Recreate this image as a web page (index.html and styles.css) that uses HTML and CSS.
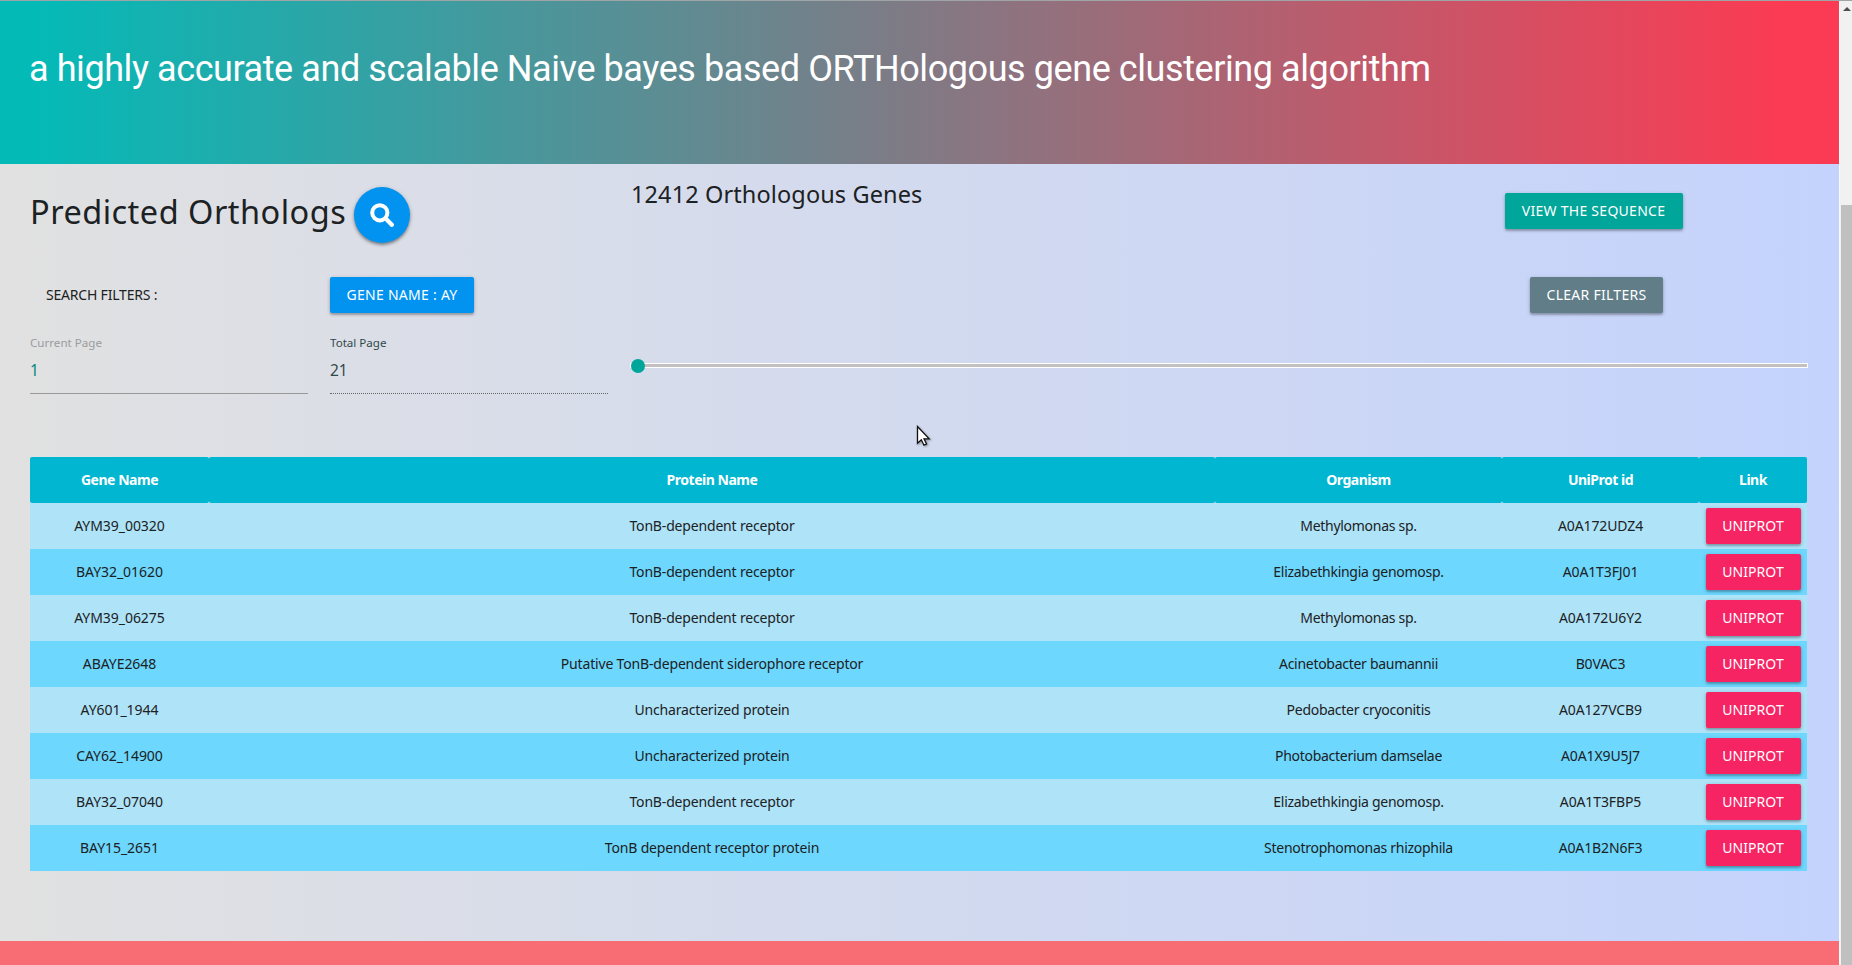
FILE: index.html
```
<!DOCTYPE html>
<html lang="en">
<head>
<meta charset="utf-8">
<title>Predicted Orthologs</title>
<link rel="stylesheet" href="styles.css">
</head>
<body>
<div class="page">
  <header class="banner"><h1>a highly accurate and scalable Naive bayes based ORTHologous gene clustering algorithm</h1></header>
  <main class="content">
    <div class="row heading-row">
      <div class="heading">
        <h2>Predicted Orthologs</h2>
        <button class="search" aria-label="Search"><svg width="24" height="24" viewBox="0 0 24 24"><circle cx="9.8" cy="9.8" r="7.6" fill="none" stroke="#fff" stroke-width="4"/><path d="M15.6 15.6L21.8 21.8" stroke="#fff" stroke-width="4.3" stroke-linecap="round"/></svg></button>
      </div>
      <h3>12412 Orthologous Genes</h3>
      <div class="action"><button class="btn teal">VIEW THE SEQUENCE</button></div>
    </div>
    <div class="row filter-row">
      <span class="filter-label">SEARCH FILTERS :</span>
      <div><button class="btn blue">GENE NAME : AY</button></div>
      <div class="action"><button class="btn grey">CLEAR FILTERS</button></div>
    </div>
    <div class="row pager-row">
      <div class="field current"><label>Current Page</label><span class="value">1</span></div>
      <div class="field total"><label>Total Page</label><span class="value">21</span></div>
      <div class="slider"><span class="thumb"></span></div>
    </div>
    <table>
      <colgroup><col class="c-gene"><col class="c-protein"><col class="c-organism"><col class="c-id"><col class="c-link"></colgroup>
      <thead><tr><th>Gene Name</th><th>Protein Name</th><th>Organism</th><th>UniProt id</th><th>Link</th></tr></thead>
      <tbody>
        <tr><td class="gene">AYM39_00320</td><td class="protein">TonB-dependent receptor</td><td class="organism">Methylomonas sp.</td><td class="id">A0A172UDZ4</td><td class="link"><button class="btn pink">UNIPROT</button></td></tr>
        <tr><td class="gene">BAY32_01620</td><td class="protein">TonB-dependent receptor</td><td class="organism">Elizabethkingia genomosp.</td><td class="id">A0A1T3FJ01</td><td class="link"><button class="btn pink">UNIPROT</button></td></tr>
        <tr><td class="gene">AYM39_06275</td><td class="protein">TonB-dependent receptor</td><td class="organism">Methylomonas sp.</td><td class="id">A0A172U6Y2</td><td class="link"><button class="btn pink">UNIPROT</button></td></tr>
        <tr><td class="gene">ABAYE2648</td><td class="protein">Putative TonB-dependent siderophore receptor</td><td class="organism">Acinetobacter baumannii</td><td class="id">B0VAC3</td><td class="link"><button class="btn pink">UNIPROT</button></td></tr>
        <tr><td class="gene">AY601_1944</td><td class="protein">Uncharacterized protein</td><td class="organism">Pedobacter cryoconitis</td><td class="id">A0A127VCB9</td><td class="link"><button class="btn pink">UNIPROT</button></td></tr>
        <tr><td class="gene">CAY62_14900</td><td class="protein">Uncharacterized protein</td><td class="organism">Photobacterium damselae</td><td class="id">A0A1X9U5J7</td><td class="link"><button class="btn pink">UNIPROT</button></td></tr>
        <tr><td class="gene">BAY32_07040</td><td class="protein">TonB-dependent receptor</td><td class="organism">Elizabethkingia genomosp.</td><td class="id">A0A1T3FBP5</td><td class="link"><button class="btn pink">UNIPROT</button></td></tr>
        <tr><td class="gene">BAY15_2651</td><td class="protein">TonB dependent receptor protein</td><td class="organism">Stenotrophomonas rhizophila</td><td class="id">A0A1B2N6F3</td><td class="link"><button class="btn pink">UNIPROT</button></td></tr>
      </tbody>
    </table>
  </main>
  <footer class="footer"></footer>
</div>
<div class="scrollbar"><span class="arrow-up"></span><span class="bar"></span></div>
<svg class="cursor" width="16" height="24" viewBox="0 0 16 24"><path d="M1.5 1.5V18.3L5.3 14.8L8 20.2L10.6 19L8 13.8H13.2Z" fill="#fff" stroke="#111" stroke-width="1.3"/></svg>
</body>
</html>
```
FILE: styles.css
```
* { box-sizing: border-box; }
body {
  margin: 0;
  height: 965px;
  display: flex;
  overflow: hidden;
  border-top: 1px solid #9fa5a7;
  font-family: "Noto Sans", sans-serif;
  font-size: 14px;
  color: #1c2123;
}
h1, h2, h3 { margin: 0; font-weight: 400; }
.page { width: 1839px; display: flex; flex-direction: column; }
.banner {
  height: 163px;
  padding: 38px 29px 0;
  background: linear-gradient(90deg, #04bab7 2%, #fb3b53 97%);
  color: #fff;
}
.banner h1 {
  font: 400 36px/60px Roboto, sans-serif;
  letter-spacing: -0.42px;
  white-space: nowrap;
}
.content {
  height: 777px;
  padding: 0 32px 0 30px;
  background: linear-gradient(90deg, #e1e1e1, #c4d3fd);
}
.footer { flex: 1; background: #f86c74; }

.row { display: grid; column-gap: 22px; }
.heading-row { grid-template-columns: 578px 728px 427px; height: 96px; }
.heading { display: flex; align-items: center; gap: 8px; height: 102px; }
h2 { font-size: 32.5px; line-height: 44px; letter-spacing: 0.48px; padding-bottom: 6px; white-space: nowrap; }
h3 { font-size: 23.5px; line-height: 30px; letter-spacing: 0.11px; padding: 15px 0 0 1px; }
.action { display: flex; justify-content: center; align-items: flex-start; }
.heading-row .action { padding-top: 29px; }
.search {
  width: 56px;
  height: 56px;
  border: 0;
  padding: 0;
  border-radius: 50%;
  display: grid;
  place-items: center;
  background: #0292f0;
  box-shadow: 0 2px 3px rgba(0,0,0,.35), 0 1px 5px rgba(0,0,0,.15);
}

.btn {
  height: 36px;
  padding: 0 16.5px;
  border: 0;
  border-radius: 2px;
  color: #fff;
  font: 14px/36px "Noto Sans", sans-serif;
  letter-spacing: 0.27px;
  white-space: nowrap;
  box-shadow: 0 2px 2px rgba(0,0,0,.2), 0 1px 4px rgba(0,0,0,.2);
}
.teal { width: 178px; background: #00a69a; }
.blue { width: 144px; background: #0292f0; }
.grey { width: 133px; background: #607d88; }
.pink { width: 95px; background: #f72464; letter-spacing: 0.05px; display: block; margin: 0 auto; }

.filter-row { grid-template-columns: 278px 278px 728px 427px; height: 76px; padding-top: 17px; }
.filter-row .action { grid-column: 4; padding-left: 6px; }
.filter-label { padding-left: 16px; line-height: 36px; letter-spacing: -0.2px; }

.pager-row { grid-template-columns: 278px 278px 1178px; height: 121px; }
.field { height: 58px; display: flex; flex-direction: column; border-bottom: 1px solid #999; }
.field label { font-size: 11.6px; line-height: 14px; color: #9a9c9d; }
.field.total { border-bottom-style: dotted; border-bottom-color: #666; }
.field.total label { color: #2f4a4d; }
.value { font-size: 15.5px; line-height: 22px; padding-top: 9px; }
.current .value { color: #00877f; }
.total .value { color: #33484b; }
.slider {
  height: 5px;
  margin-top: 27px;
  border: 1px solid #fff;
  background: #c2c0c0;
  display: flex;
  align-items: center;
}
.thumb { flex: none; width: 14px; height: 14px; border-radius: 50%; background: #00a69a; }

table { width: 1777px; table-layout: fixed; border-collapse: separate; border-spacing: 0; text-align: center; }
.c-gene { width: 179px; }
.c-protein { width: 1006px; }
.c-organism { width: 287px; }
.c-id { width: 197px; }
.c-link { width: 108px; }
th, td { height: 46px; padding: 0 0 2px; }
td.link { padding: 0; }
th { background: #00b6d1; color: #fff; font-weight: 700; letter-spacing: -0.48px; border-radius: 2px; }
tbody tr { background: #afe3f8; }
tbody tr:nth-child(even) { background: #6dd7fe; }
.gene { letter-spacing: -0.05px; }
.protein { letter-spacing: -0.17px; }
.organism { letter-spacing: -0.28px; }
.id { letter-spacing: -0.12px; }

.scrollbar {
  width: 13px;
  background: #f1f1f1;
  border-left: 1px solid #fafafa;
  padding-left: 1px;
  display: flex;
  flex-direction: column;
}
.arrow-up {
  align-self: center;
  border: 4px solid transparent;
  border-top: 0;
  border-bottom-color: #4d4d4d;
  margin: 6px 0 194px 0;
}
.bar { flex: 1; align-self: stretch; background: #c0c0c0; }
.cursor { position: absolute; left: 916px; top: 425px; filter: drop-shadow(1px 1px 1px rgba(0,0,0,.35)); }
```
